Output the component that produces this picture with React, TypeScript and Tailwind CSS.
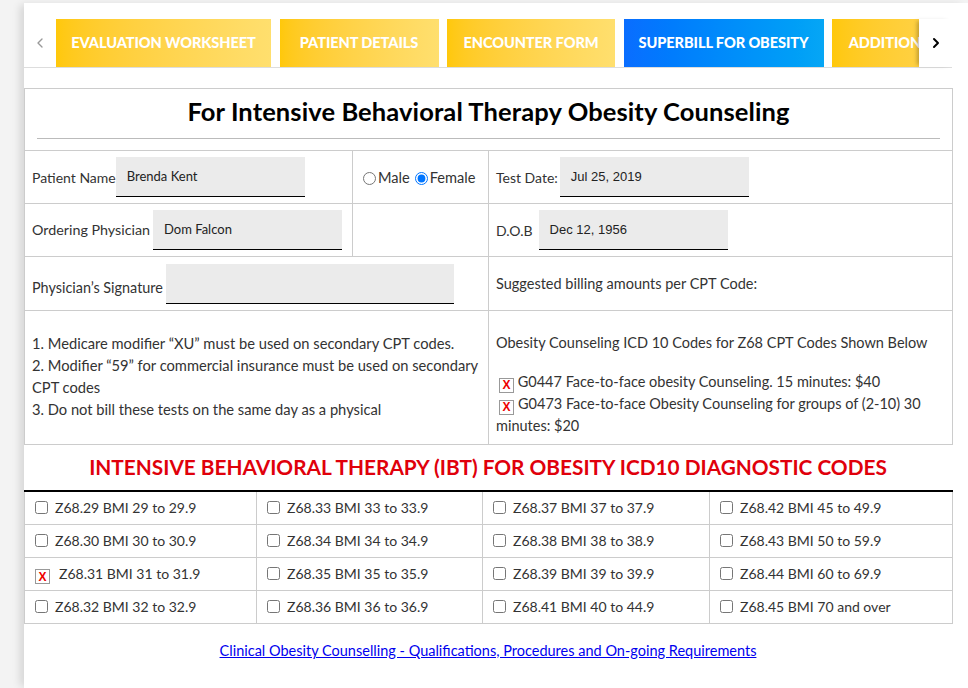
import { ChevronLeft, ChevronRight } from 'lucide-react';

const tabs = [
  { label: 'EVALUATION WORKSHEET', w: 'w-[215px]', active: false },
  { label: 'PATIENT DETAILS', w: 'w-[159px]', active: false },
  { label: 'ENCOUNTER FORM', w: 'w-[168px]', active: false },
  { label: 'SUPERBILL FOR OBESITY', w: 'w-[200px]', active: true },
  { label: 'ADDITIONAL INFORMATION', w: 'w-[230px]', active: false },
];

const codes = [
  ['Z68.29 BMI 29 to 29.9', 'Z68.33 BMI 33 to 33.9', 'Z68.37 BMI 37 to 37.9', 'Z68.42 BMI 45 to 49.9'],
  ['Z68.30 BMI 30 to 30.9', 'Z68.34 BMI 34 to 34.9', 'Z68.38 BMI 38 to 38.9', 'Z68.43 BMI 50 to 59.9'],
  ['Z68.31 BMI 31 to 31.9', 'Z68.35 BMI 35 to 35.9', 'Z68.39 BMI 39 to 39.9', 'Z68.44 BMI 60 to 69.9'],
  ['Z68.32 BMI 32 to 32.9', 'Z68.36 BMI 36 to 36.9', 'Z68.41 BMI 40 to 44.9', 'Z68.45 BMI 70 and over'],
];

const checked = ['Z68.31 BMI 31 to 31.9'];

function XBox() {
  return (
    <span className="inline-flex items-center justify-center w-[15px] h-[15px] border border-[#999] bg-white text-[#e00] font-bold text-[12px] leading-none font-['Liberation_Sans',sans-serif] align-[-2px]">
      X
    </span>
  );
}

function Field({ value, w, mono }: { value: string; w: string; mono?: boolean }) {
  return (
    <div
      className={`${w} h-[40px] bg-[#ebebeb] border-b border-black flex items-center px-[11px] text-[13px] text-[#222] ${
        mono ? "font-['Liberation_Sans',sans-serif]" : ''
      }`}
    >
      {value}
    </div>
  );
}

export default function App() {
  return (
    <div className="min-h-screen bg-[#f3f3f3] pt-[3px] font-['Lato',sans-serif] text-[#333]">
      <div className="ml-6 min-h-[685px] bg-white pr-4 pt-4 shadow-[-6px_0_8px_-2px_rgba(0,0,0,0.12)]">
        {/* Tabs */}
        <div className="flex items-stretch h-[49px] border-b border-[#ddd]">
          <div className="w-8 flex items-center justify-center text-[#999]">
            <ChevronLeft size={16} strokeWidth={2} />
          </div>
          <div className="flex-1 flex gap-[8.5px] overflow-hidden">
            {tabs.map((t) => (
              <div
                key={t.label}
                className={`${t.w} shrink-0 h-12 flex items-center justify-center px-4 text-white font-black text-[14.6px] tracking-[-0.1px] whitespace-nowrap ${
                  t.active
                    ? 'bg-gradient-to-r from-[#0a6dff] to-[#06a6f5]'
                    : 'bg-gradient-to-r from-[#ffc80a] to-[#ffdf6e]'
                }`}
              >
                {t.label}
              </div>
            ))}
          </div>
          <div className="w-[33px] flex items-center justify-center text-black shadow-[-4px_0_4px_-2px_rgba(0,0,0,0.25)]">
            <ChevronRight size={16} strokeWidth={3} />
          </div>
        </div>

        {/* Superbill form */}
        <table className="mt-5 w-[928px] table-fixed border-collapse text-[14px]">
          <colgroup>
            <col className="w-[328px]" />
            <col className="w-[136px]" />
            <col className="w-[464px]" />
          </colgroup>
          <tbody>
            <tr>
              <td colSpan={3} className="border border-[#ccc] h-[62px] px-3 align-top">
                <h1 className="text-center text-[25.5px] font-bold text-black pt-[7px] pb-[12px] leading-[30px] tracking-[0.1px]">
                  For Intensive Behavioral Therapy Obesity Counseling
                </h1>
                <hr className="border-[#bbb]" />
              </td>
            </tr>
            <tr className="h-[53px]">
              <td className="border border-[#ccc] px-[7px]">
                <div className="flex items-center">
                  <span className="text-[14px]">Patient Name</span>
                  <Field value="Brenda Kent" w="w-[189px]" />
                </div>
              </td>
              <td className="border border-[#ccc] px-[10px] pt-[4px] text-[14.6px]">
                <label className="inline-flex items-center">
                  <input type="radio" name="sex" className="m-0 mr-[2px] w-[13px] h-[13px]" />
                  Male
                </label>
                <label className="inline-flex items-center ml-[5px]">
                  <input type="radio" name="sex" defaultChecked className="m-0 mr-[2px] w-[13px] h-[13px]" />
                  Female
                </label>
              </td>
              <td className="border border-[#ccc] px-[7px]">
                <div className="flex items-center">
                  <span className="mr-[2px] text-[14px]">Test Date:</span>
                  <Field value="Jul 25, 2019" w="w-[189px]" mono />
                </div>
              </td>
            </tr>
            <tr className="h-[53px]">
              <td className="border border-[#ccc] px-[7px]">
                <div className="flex items-center">
                  <span className="mr-[3px] text-[14.3px]">Ordering Physician</span>
                  <Field value="Dom Falcon" w="w-[189px]" />
                </div>
              </td>
              <td className="border border-[#ccc]" />
              <td className="border border-[#ccc] px-[7px]">
                <div className="flex items-center">
                  <span className="mr-[6px] text-[14px]">D.O.B</span>
                  <Field value="Dec 12, 1956" w="w-[189px]" mono />
                </div>
              </td>
            </tr>
            <tr className="h-[54px]">
              <td colSpan={2} className="border border-[#ccc] px-[7px]">
                <div className="flex items-center">
                  <span className="mr-[3px] pt-2 text-[14.4px]">Physician’s Signature</span>
                  <Field value="" w="w-[288px]" />
                </div>
              </td>
              <td className="border border-[#ccc] px-[7px] text-[14.5px]">Suggested billing amounts per CPT Code:</td>
            </tr>
            <tr className="h-[134px]">
              <td colSpan={2} className="border border-[#ccc] px-[7px] leading-[22px] text-[14.7px] pb-[4px]">
                <p>1. Medicare modifier “XU” must be used on secondary CPT codes.</p>
                <p>2. Modifier “59” for commercial insurance must be used on secondary CPT codes</p>
                <p>3. Do not bill these tests on the same day as a physical</p>
              </td>
              <td className="border border-[#ccc] px-[7px] leading-[22px] align-top pt-[21px] text-[14.5px]">
                <p className="mb-[17px]">Obesity Counseling ICD 10 Codes for Z68 CPT Codes Shown Below</p>
                <p className="pl-[3px]">
                  <XBox /> G0447 Face-to-face obesity Counseling. 15 minutes: $40
                </p>
                <p>
                  <span className="inline-block ml-[3px] mr-[4px]">
                    <XBox />
                  </span>
                  G0473 Face-to-face Obesity Counseling for groups of (2-10) 30 minutes: $20
                </p>
              </td>
            </tr>
          </tbody>
        </table>

        <h2 className="w-[928px] text-center text-[#e0000b] font-bold text-[20.8px] leading-[24px] mt-[10px] mb-[11px]">
          INTENSIVE BEHAVIORAL THERAPY (IBT) FOR OBESITY ICD10 DIAGNOSTIC CODES
        </h2>

        <table className="w-[928px] table-fixed border-collapse border-t-2 border-black text-[14px]">
          <colgroup>
            <col className="w-[232px]" />
            <col className="w-[226px]" />
            <col className="w-[227px]" />
            <col className="w-[243px]" />
          </colgroup>
          <tbody>
            {codes.map((row, i) => (
              <tr key={i} className="h-[33px]">
                {row.map((c) => (
                  <td key={c} className="border-x border-b border-[#ccc] px-[10px]">
                    <label className="flex items-center gap-[7px]">
                      {checked.includes(c) ? (
                        <span className="mr-[2px]">
                          <XBox />
                        </span>
                      ) : (
                        <input type="checkbox" className="m-0 w-[13px] h-[13px]" />
                      )}
                      {c}
                    </label>
                  </td>
                ))}
              </tr>
            ))}
          </tbody>
        </table>

        <div className="w-[928px] text-center mt-[16px] text-[14.5px]">
          <a href="#" className="text-[#0000ee] underline">
            Clinical Obesity Counselling - Qualifications, Procedures and On-going Requirements
          </a>
        </div>
      </div>
    </div>
  );
}
